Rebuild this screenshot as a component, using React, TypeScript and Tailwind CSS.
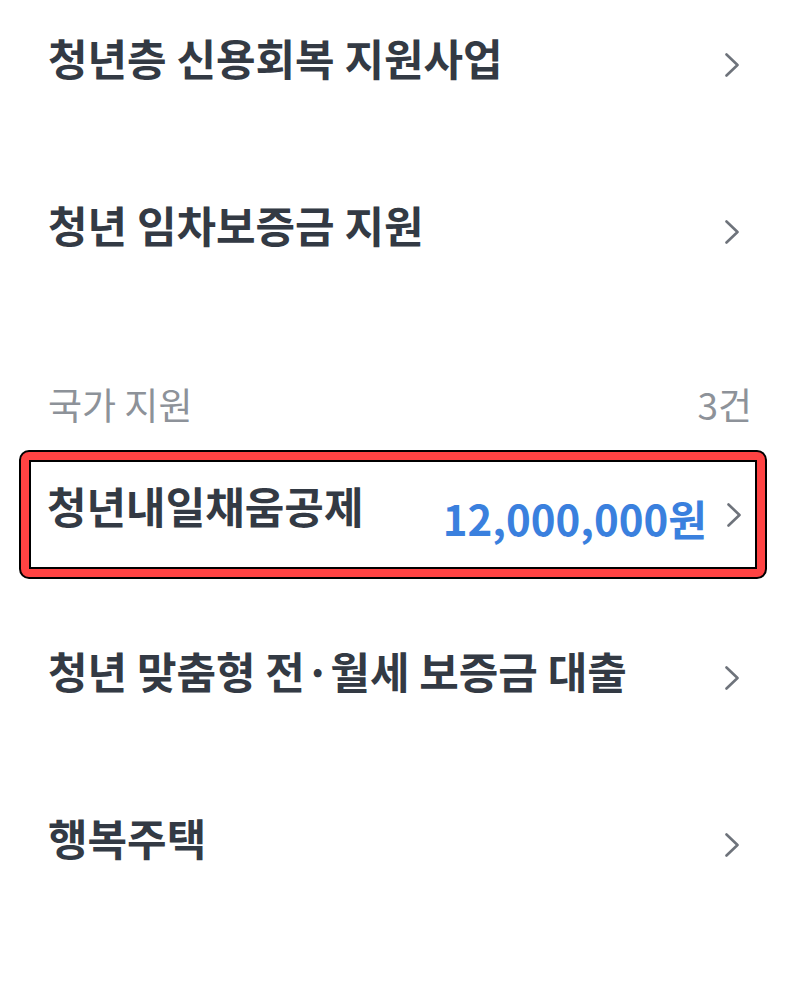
import React from "react";

const font = { fontFamily: '"Noto Sans CJK KR", "Noto Sans", sans-serif' };

function Chevron({ className = "" }: { className?: string }) {
  return (
    <svg
      className={`w-[16px] h-[24px] shrink-0 ${className}`}
      viewBox="0 0 16 24"
      fill="none"
      stroke="#6e737b"
      strokeWidth={2.6}
      strokeLinecap="round"
      strokeLinejoin="round"
    >
      <path d="M2.5 1.5l11 10.5-11 10.5" />
    </svg>
  );
}

function Row({ title }: { title: string }) {
  return (
    <div className="flex items-center justify-between h-[167px] pl-[48px] pr-[60px]">
      <span className="text-[43px] font-semibold text-[#333a44] leading-none">
        {title}
      </span>
      <Chevron className="mt-[14px]" />
    </div>
  );
}

export default function App() {
  return (
    <div className="w-[800px] h-[984px] bg-white overflow-hidden" style={font}>
      <div className="-mt-[26px]">
        <Row title="청년층 신용회복 지원사업" />
        <Row title="청년 임차보증금 지원" />
      </div>

      {/* Section header */}
      <div className="flex items-center justify-between pl-[48px] pr-[48px] pt-[78px] pb-[28px]">
        <span className="text-[37px] leading-[36px] text-[#8d9299]">국가 지원</span>
        <span className="text-[37px] leading-[36px] text-[#8d9299]">3건</span>
      </div>

      {/* Highlighted row */}
      <div className="ml-[19px] mr-[33px] mb-[8px] rounded-[10px] border-2 border-black bg-[#ff4343] p-[8px]">
        <div className="flex items-center justify-between h-[109px] border-2 border-black bg-white pl-[16px] pr-[13px]">
          <span className="text-[43px] font-semibold text-[#333a44] leading-none -mt-[18px]">
            청년내일채움공제
          </span>
          <div className="flex items-center gap-[19px] mt-[6px]">
            <span className="text-[42px] font-semibold text-[#3a80de] leading-none">
              12,000,000원
            </span>
            <Chevron className="-mt-[6px]" />
          </div>
        </div>
      </div>

      <Row title="청년 맞춤형 전·월세 보증금 대출" />
      <Row title="행복주택" />
    </div>
  );
}
